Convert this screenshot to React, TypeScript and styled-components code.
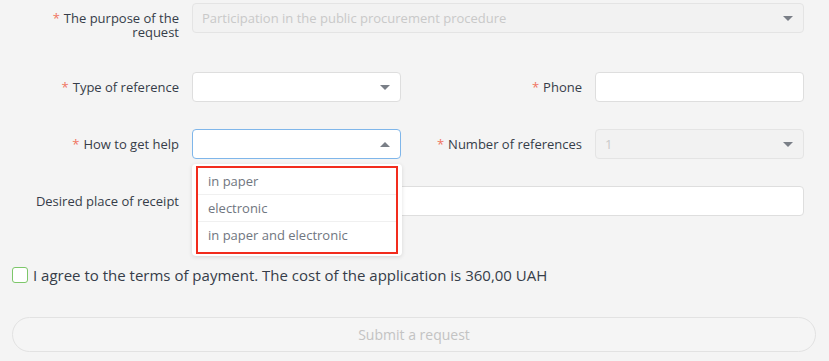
import React, { useState } from 'react'
import styled, { createGlobalStyle } from 'styled-components'

const GlobalStyle = createGlobalStyle`
  html, body {
    margin: 0;
    padding: 0;
    background: #f4f4f4;
  }
  body {
    font-family: 'Open Sans', 'Liberation Sans', sans-serif;
    color: #3c4350;
  }
`

const Page = styled.div`
  width: 829px;
  height: 361px;
  box-sizing: border-box;
  padding: 3px 25px 0 12px;
  overflow: hidden;
`

const Row = styled.div<{ $mt?: number; $top?: boolean }>`
  display: flex;
  align-items: ${(p) => (p.$top ? 'flex-start' : 'center')};
  margin-top: ${(p) => p.$mt ?? 0}px;
`

const Label = styled.label<{ $w?: number; $pt?: number }>`
  box-sizing: border-box;
  width: ${(p) => (p.$w ? `${p.$w}px` : 'auto')};
  flex: ${(p) => (p.$w ? 'none' : '1')};
  padding-right: 13px;
  padding-top: ${(p) => p.$pt ?? 0}px;
  text-align: right;
  font-size: 13px;
  line-height: 14px;
  color: #363d49;
`

const Star = styled.span`
  color: #f07461;
  margin-right: 4px;
`

const FieldWrap = styled.div<{ $w?: number; $raised?: boolean }>`
  position: relative;
  width: ${(p) => (p.$w ? `${p.$w}px` : 'auto')};
  flex: ${(p) => (p.$w ? 'none' : '1')};
  z-index: ${(p) => (p.$raised ? 2 : 'auto')};
`

const Box = styled.div<{ $disabled?: boolean; $focused?: boolean }>`
  box-sizing: border-box;
  height: 30px;
  display: flex;
  align-items: center;
  padding: 0 10px 0 9px;
  border-radius: 4px;
  border: 1px solid
    ${(p) => (p.$focused ? '#7fb6ea' : p.$disabled ? '#e4e4e4' : '#dedede')};
  background: ${(p) => (p.$disabled ? '#f2f2f2' : '#fff')};
  font-size: 13px;
  color: #c9c9c9;
`

const Value = styled.span`
  flex: 1;
  white-space: nowrap;
  overflow: hidden;
`

const Arrow = styled.span<{ $up?: boolean }>`
  width: 0;
  height: 0;
  border-left: 5px solid transparent;
  border-right: 5px solid transparent;
  ${(p) =>
    p.$up ? 'border-bottom: 5px solid #7a7f87;' : 'border-top: 5px solid #7a7f87;'}
`

const Menu = styled.ul`
  position: absolute;
  top: 35px;
  left: 0;
  right: -1px;
  margin: 0;
  padding: 2px 4px 2px 4px;
  list-style: none;
  background: #fff;
  border-radius: 4px;
  box-shadow: 0 1px 4px rgba(0, 0, 0, 0.12);
`

const Highlight = styled.div`
  border: 2px solid #f22c1d;
  padding-bottom: 4px;
`

const Option = styled.li`
  height: 26px;
  display: flex;
  align-items: center;
  padding-left: 10px;
  font-size: 13px;
  color: #707680;
  & + & {
    border-top: 1px solid #f0f0f0;
  }
`

const Agree = styled.label`
  display: flex;
  align-items: center;
  gap: 5px;
  margin-top: 51px;
  font-size: 15px;
  line-height: 16px;
  color: #363d49;
`

const Check = styled.span`
  box-sizing: border-box;
  width: 16px;
  height: 16px;
  border: 1.5px solid #7dc76a;
  border-radius: 3px;
  background: #fff;
`

const Submit = styled.button`
  display: block;
  box-sizing: border-box;
  width: 804px;
  height: 35px;
  margin-top: 34px;
  border: 1px solid #e2e2e2;
  border-radius: 18px;
  background: #f5f5f5;
  font-family: inherit;
  font-size: 14px;
  color: #c3c3c3;
`

const Select = ({
  value,
  disabled,
  focused,
}: {
  value?: string
  disabled?: boolean
  focused?: boolean
}) => (
  <Box $disabled={disabled} $focused={focused}>
    <Value>{value}</Value>
    <Arrow $up={focused} />
  </Box>
)

const options = ['in paper', 'electronic', 'in paper and electronic']

const App = () => {
  const [agreed, setAgreed] = useState(false)

  return (
    <>
      <GlobalStyle />
      <Page>
        <Row $top>
          <Label $w={180} $pt={8}>
            <Star>*</Star>The purpose of the request
          </Label>
          <FieldWrap>
            <Select value="Participation in the public procurement procedure" disabled />
          </FieldWrap>
        </Row>

        <Row $mt={33}>
          <Label $w={180}>
            <Star>*</Star>Type of reference
          </Label>
          <FieldWrap $w={209}>
            <Select />
          </FieldWrap>
          <Label>
            <Star>*</Star>Phone
          </Label>
          <FieldWrap $w={209}>
            <Box />
          </FieldWrap>
        </Row>

        <Row $mt={27}>
          <Label $w={180}>
            <Star>*</Star>How to get help
          </Label>
          <FieldWrap $w={209} $raised>
            <Select focused />
            <Menu>
              <Highlight>
                {options.map((o) => (
                  <Option key={o}>{o}</Option>
                ))}
              </Highlight>
            </Menu>
          </FieldWrap>
          <Label>
            <Star>*</Star>Number of references
          </Label>
          <FieldWrap $w={209}>
            <Select value="1" disabled />
          </FieldWrap>
        </Row>

        <Row $mt={27}>
          <Label $w={180}>Desired place of receipt</Label>
          <FieldWrap>
            <Box />
          </FieldWrap>
        </Row>

        <Agree onClick={() => setAgreed(!agreed)}>
          <Check />I agree to the terms of payment. The cost of the application is 360,00 UAH
        </Agree>

        <Submit disabled={!agreed}>Submit a request</Submit>
      </Page>
    </>
  )
}

export default App
